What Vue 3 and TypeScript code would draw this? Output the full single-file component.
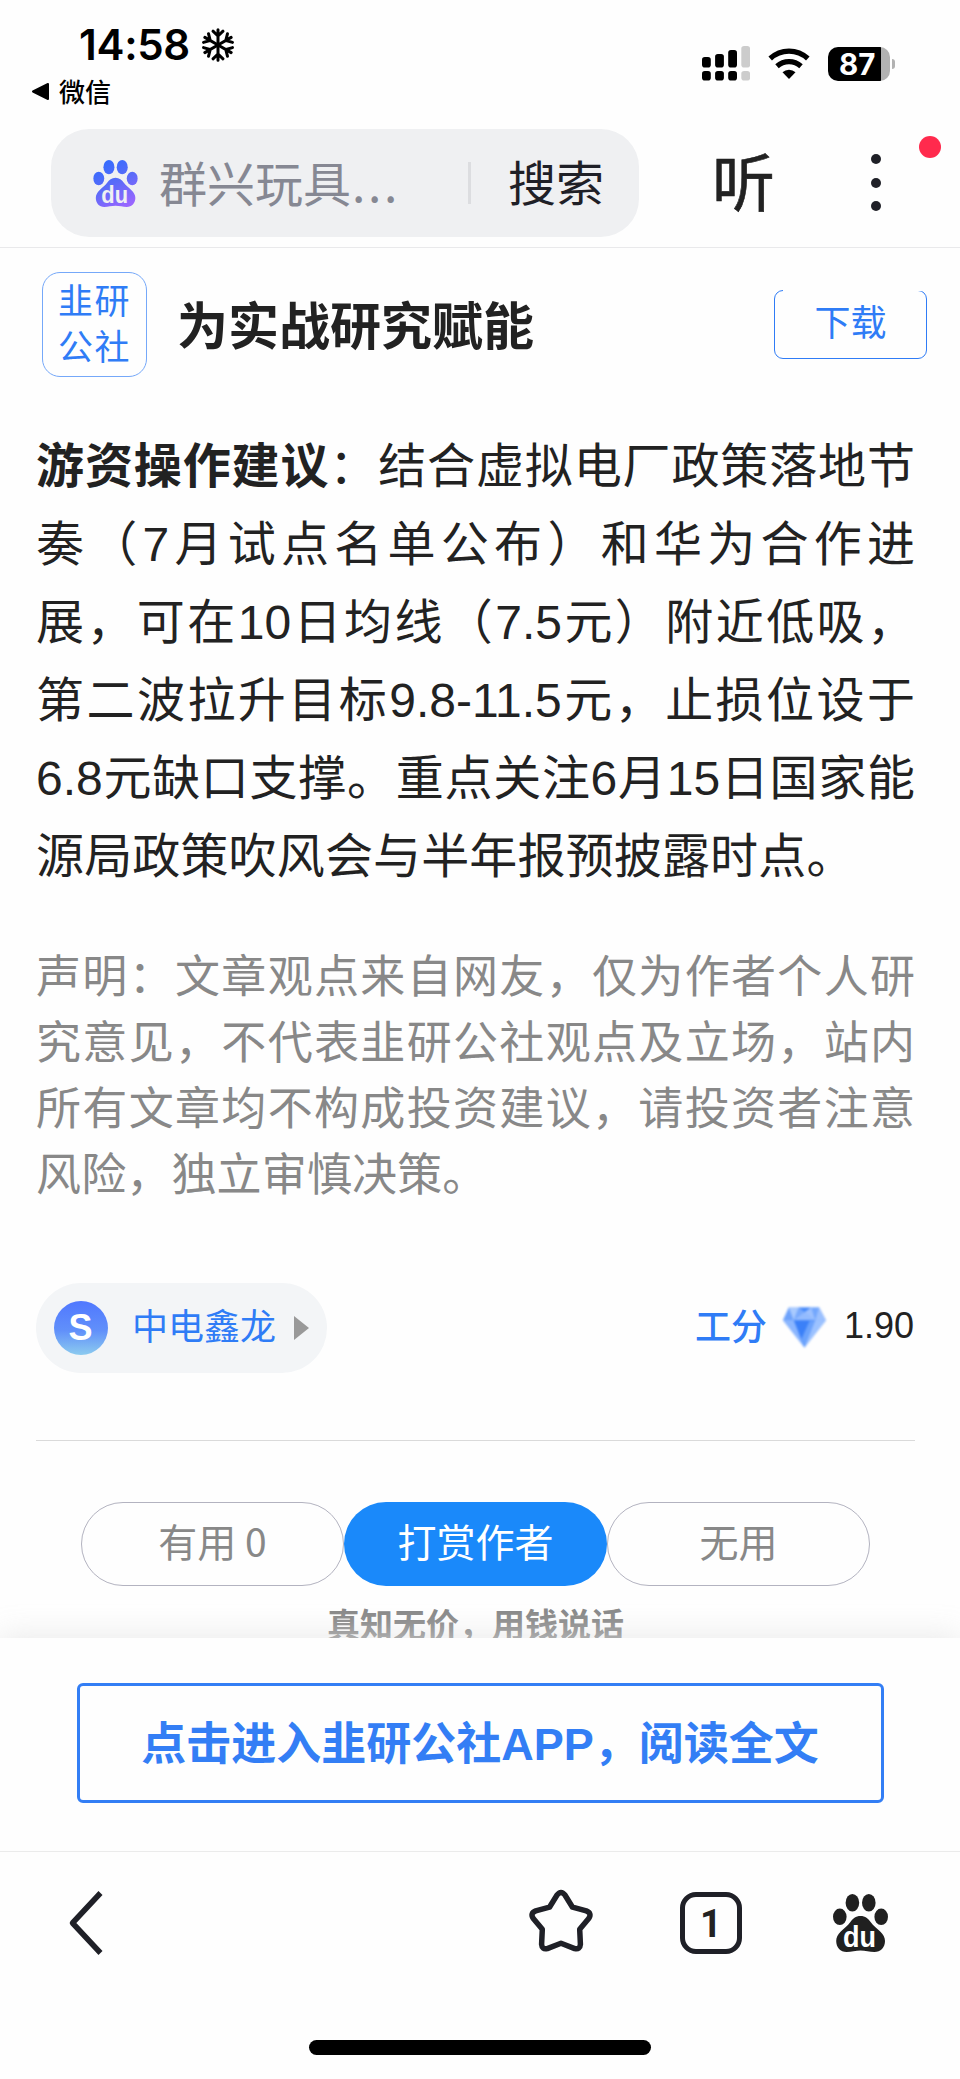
<script setup lang="ts">
const adviceLead = '游资操作建议'
const adviceLines: string[] = [
  '：结合虚拟电厂政策落地节',
  '奏（7月试点名单公布）和华为合作进',
  '展，可在10日均线（7.5元）附近低吸，',
  '第二波拉升目标9.8-11.5元，止损位设于',
  '6.8元缺口支撑。重点关注6月15日国家能',
  '源局政策吹风会与半年报预披露时点。',
]
const noticeLines: string[] = [
  '声明：文章观点来自网友，仅为作者个人研',
  '究意见，不代表韭研公社观点及立场，站内',
  '所有文章均不构成投资建议，请投资者注意',
  '风险，独立审慎决策。',
]
const signalTops: number[] = [11, 8, 4, 0]
const flakeAngles: number[] = [0, 60, 120, 180, 240, 300]
</script>

<template>
  <div class="screen">
    <svg class="defs" width="0" height="0" aria-hidden="true">
      <defs>
        <linearGradient id="pawFill" gradientUnits="userSpaceOnUse" x1="10" y1="0" x2="40" y2="58">
          <stop offset="0" stop-color="#2f6bff" />
          <stop offset="0.5" stop-color="#5a6bf8" />
          <stop offset="1" stop-color="#9a66ff" />
        </linearGradient>
        <symbol id="paw" viewBox="0 0 55 58">
          <ellipse cx="6.8" cy="22.8" rx="6.8" ry="8.3" />
          <ellipse cx="19.4" cy="8.8" rx="6.8" ry="8.8" />
          <ellipse cx="35.8" cy="8.8" rx="6.8" ry="8.8" />
          <ellipse cx="48.2" cy="22.8" rx="6.8" ry="8.3" />
          <path d="M27.5 22c4.800 0 7.800 2.600 10.300 6.200 2.400 3.400 6.200 6 9.400 9.200 3 3 4.800 5.800 4.800 9.600 0 6.400-4.400 11-10.600 11-5 0-9-1.500-13.900-1.500S18.600 58 13.600 58C7.400 58 3.200 53.400 3.200 47c0-3.800 1.600-6.600 4.600-9.600 3.200-3.200 7-5.800 9.400-9.200 2.500-3.600 5.500-6.200 10.300-6.200z" />
        </symbol>
      </defs>
    </svg>

    <header class="status">
      <div class="clock-side">
        <div class="clock">
          <span>14:58</span>
          <svg class="flake" width="32" height="34" viewBox="-16 -17 32 34">
            <g v-for="a in flakeAngles" :key="a" :transform="`rotate(${a})`">
              <path d="M0 0V-15.200M-5 -13.800L0 -9L5 -13.800" />
            </g>
          </svg>
        </div>
        <div class="return">
          <svg width="19" height="19" viewBox="0 0 19 19"><path d="M2 9.500L17 2V17z" stroke="#000" stroke-width="2" stroke-linejoin="round" /></svg>
          <span>微信</span>
        </div>
      </div>
      <div class="indicators">
        <svg width="48" height="35" viewBox="0 0 48 35">
          <g v-for="(t, i) in signalTops" :key="i" :fill="i === 3 ? '#ccc' : '#000'">
            <rect :x="i * 13.1" :y="t" width="8.800" :height="21.500 - t" rx="2.800" />
            <rect :x="i * 13.1" y="25" width="8.800" height="9.500" rx="2.800" />
          </g>
        </svg>
        <svg class="wifi" width="42" height="32" viewBox="0 0 42 32">
          <path d="M2.200 10.500A27.500 27.500 0 0 1 39.800 10.500M9 18.200A18 18 0 0 1 33 18.200" fill="none" stroke="#000" stroke-width="5.200" />
          <path d="M14.500 24.200A9.500 9.500 0 0 1 27.500 24.200L21 31z" />
        </svg>
        <div class="battery"><span>87</span></div>
        <div class="nub"></div>
      </div>
    </header>

    <nav class="topbar">
      <div class="search">
        <svg class="search-paw" width="45" height="47" viewBox="0 0 55 58">
          <use href="#paw" width="55" height="58" fill="url(#pawFill)" />
          <text x="10" y="53" textLength="33" lengthAdjust="spacingAndGlyphs">du</text>
        </svg>
        <span class="query">群兴玩具<span class="dots">...</span></span>
        <i class="bar"></i>
        <span class="go">搜索</span>
      </div>
      <span class="listen">听</span>
      <div class="more"><i></i><i></i><i></i><b></b></div>
    </nav>

    <main>
      <section class="promo">
        <div class="logo"><span>韭研</span><span>公社</span></div>
        <h1>为实战研究赋能</h1>
        <button class="download">下载</button>
      </section>

      <article class="advice">
        <p v-for="(line, i) in adviceLines" :key="i"><strong v-if="i === 0">{{ adviceLead }}</strong>{{ line }}</p>
      </article>
      <article class="notice">
        <p v-for="(line, i) in noticeLines" :key="i">{{ line }}</p>
      </article>

      <section class="meta">
        <div class="stock">
          <span class="badge">S</span>
          <span class="name">中电鑫龙</span>
          <svg width="15" height="24" viewBox="0 0 15 24"><path d="M0 0L15 12L0 24z" fill="#999" /></svg>
        </div>
        <div class="score">
          <span class="label">工分</span>
          <svg class="gem" width="43" height="41" viewBox="0 0 44 41">
            <path d="M6 0H37L44 13L22 41L0 13z" fill="#83b0fc" />
            <path d="M6 0L11 13H0z" fill="#6da2fb" />
            <path d="M6 0H16L11 13z" fill="#a9cafe" />
            <path d="M16 0H29L22 5z" fill="#4488fa" />
            <path d="M16 0L22 5L11 13z" fill="#79aafc" />
            <path d="M29 0L33 13L22 5z" fill="#9dc1fe" />
            <path d="M29 0H37L33 13z" fill="#73a7fd" />
            <path d="M37 0L44 13H33z" fill="#9bc0fe" />
            <path d="M11 13L22 5L33 13H11z" fill="#93bbfe" />
            <path d="M0 13H11L22 41z" fill="#8bb6fe" />
            <path d="M11 13H33L22 41z" fill="#3b80f8" />
            <path d="M27 14L33 13L22 41L19 32z" fill="#6ca3fc" />
            <path d="M33 13H44L22 41z" fill="#9cc2ff" />
          </svg>
          <span class="value">1.90</span>
        </div>
      </section>

      <section class="votes">
        <button>有用 0</button>
        <button class="reward">打赏作者</button>
        <button>无用</button>
      </section>
      <p class="slogan">真知无价，用钱说话</p>
    </main>

    <section class="open-app"><button>点击进入韭研公社APP，阅读全文</button></section>

    <footer class="toolbar">
      <svg class="back" width="40" height="68" viewBox="0 0 40 68"><path d="M33.500 4L5.500 34L33.500 64" /></svg>
      <svg class="star" width="66" height="64" viewBox="0 0 66 64">
        <path d="M28.900 6.200Q33 .8 37.100 6.200L44.500 18.200L58.300 21.900Q64.200 24.200 60.700 29.600L51.700 40.300L52.400 55.200Q52 60.900 46.700 59.600L33 54.200L19.300 59.600Q14 60.900 13.600 55.200L14.300 40.300L5.300 29.600Q1.800 24.200 7.700 21.900L21.500 18.200z" />
      </svg>
      <div class="tabs">1</div>
      <svg class="home" width="55" height="58" viewBox="0 0 55 58">
        <use href="#paw" width="55" height="58" fill="#202020" />
        <text x="10" y="53" textLength="33" lengthAdjust="spacingAndGlyphs">du</text>
      </svg>
    </footer>
    <div class="indicator"></div>
  </div>
</template>

<style>
body { margin: 0; background: #fff; }
</style>

<style scoped>
* { box-sizing: border-box; }
p, h1 { margin: 0; }
button { font: inherit; padding: 0; background: none; }
svg { display: block; flex: none; }
.defs { position: absolute; }
.screen {
  width: 960px; height: 2079px; overflow: hidden; background: #fefefe; color: #222;
  display: flex; flex-direction: column; text-spacing-trim: space-all; white-space: nowrap;
  font-family: "Liberation Sans", "Noto Sans CJK SC", sans-serif;
}
.status { height: 129px; flex: none; display: flex; justify-content: space-between; color: #000; }
.clock { display: flex; align-items: center; height: 50px; margin: 20px 0 0 79px; font: 600 42px/50px Inter, sans-serif; letter-spacing: -.3px; }
.flake { margin: -1px 0 0 12px; fill: none; stroke: #000; stroke-width: 3; stroke-linecap: round; }
.return { display: flex; align-items: center; gap: 9px; margin: 2px 0 0 31px; height: 39px; font: 500 26px/39px "Noto Sans CJK SC", sans-serif; }
.return span { margin-top: -3px; }
.indicators { display: flex; align-items: flex-start; padding: 46px 65px 0 0; }
.wifi { margin: 2px 0 0 18px; }
.battery {
  width: 62px; height: 34px; margin: 1px 0 0 18px; border-radius: 10px;
  background: linear-gradient(90deg, #000 53px, #b2b2b2 53px);
  color: #fff; font: 700 29.500px/34px Inter, sans-serif; padding-left: 11px;
}
.nub { width: 3px; height: 10px; margin: 13px 0 0 2px; background: #b2b2b2; border-radius: 0 5px 5px 0; }

.topbar { height: 119px; flex: none; display: flex; border-bottom: 1px solid #e9e9eb; padding-left: 51px; }
.search { width: 588px; height: 108px; border-radius: 38px; background: #eff0f2; display: flex; align-items: center; padding-left: 42px; font: 400 48px/72px "Noto Sans CJK SC", sans-serif; }
.search-paw text { fill: #eff0f2; }
svg text { font: 700 30px "Liberation Sans", sans-serif; }
.query { width: 309px; margin: -5px 0 0 21px; color: #868893; }
.dots { letter-spacing: 2.700px; margin-left: 1px; }
.bar { width: 3px; height: 42px; background: #dcdde0; }
.go { margin: -6px 0 0 37px; color: #1f2027; }
.listen { margin: -4px 0 0 73px; width: 63px; font: 400 63px/108px "Noto Sans CJK SC", sans-serif; -webkit-text-stroke: .6px #222; }
.more { position: relative; margin: 25px 0 0 96px; width: 10px; height: 57px; display: flex; flex-direction: column; justify-content: space-between; }
.more i { width: 10px; height: 10px; border-radius: 50%; background: #1f2027; }
.more b { position: absolute; left: 48px; top: -18px; width: 22px; height: 22px; border-radius: 50%; background: #ff2a4d; }

main { height: 1390px; flex: none; overflow: hidden; }
.promo { height: 105px; margin: 24px 33px 0 42px; display: flex; align-items: center; }
.logo { width: 105px; height: 105px; border: 1px solid #75a8f9; border-radius: 18px; color: #2f7cf6; font: 400 35px/46px "AR PL UKai CN", KaiTi, "Noto Sans CJK SC", serif; padding: 3px 0 0 15px; display: flex; flex-direction: column; letter-spacing: 1.500px; }
h1 { margin: 6px 0 0 30px; font-size: 51px; line-height: 76px; font-weight: 700; }
.download { position: relative; width: 153px; height: 69px; margin: -1px 0 0 auto; border: 1px solid #2f7cf6; border-radius: 9px; color: #2f7cf6; font-size: 36px; line-height: 64px; }
.download::before { content: ""; position: absolute; left: 8px; right: 4px; top: -1px; height: 1px; background: #fefefe; }
.advice { margin: 51px 45px 0 36px; font-size: 48px; line-height: 78px; }
.advice p, .notice p { text-align: justify; text-align-last: justify; }
.advice p:last-child, .notice p:last-child { text-align-last: left; letter-spacing: .15px; }
.notice { margin: 49px 45px 0 36px; font-size: 45px; line-height: 66px; color: #888; }
.meta { margin: 74px 45px 0 36px; height: 158px; border-bottom: 1px solid #dadada; display: flex; justify-content: space-between; font-size: 36px; }
.stock { width: 291px; height: 90px; border-radius: 45px; background: #f3f5f7; display: flex; align-items: center; padding-left: 18px; color: #2f7cf6; }
.badge { width: 54px; height: 54px; border-radius: 50%; background: linear-gradient(#5078ff, #6190fa 55%, #8ccbef); color: #fff; font: 700 36px/53px "Liberation Sans", sans-serif; text-align: center; text-indent: -1px; }
.name { margin: 0 18px 0 24px; line-height: 54px; }
.score { height: 90px; display: flex; align-items: center; }
.label { margin-top: -8px; color: #2f7cf6; font-weight: 500; font-family: "Noto Sans CJK SC", sans-serif; }
.gem { margin: -2px 18px 0 16px; filter: blur(.8px); }
.value { line-height: 40px; margin: -4px 1px 0 0; }
.votes { margin: 61px 90px 0 81px; display: flex; }
.votes button { width: 263px; flex: none; height: 84px; border: 1px solid #b3b3c0; border-radius: 42px; color: #888; font: 400 39px/72px "Noto Sans CJK SC", sans-serif; padding-bottom: 8px; }
.votes .reward { border: 0; background: #1a89fa; color: #fff; }
.slogan { text-align: center; margin: 13px 9px 0 0; font: 700 33px/49px "Noto Sans CJK SC", sans-serif; color: #888; }

.open-app { position: relative; height: 213px; flex: none; padding: 45px 76px 0 77px; background: #fefefe; box-shadow: 0 0 30px rgba(226, 226, 226, .8); }
.open-app button { display: block; width: 100%; height: 120px; border: 3px solid #337ef5; border-radius: 6px; color: #337ef5; font-size: 45px; line-height: 110px; font-weight: 700; padding: 4px 1px 0 0; }
.toolbar { position: relative; height: 189px; flex: none; border-top: 1px solid #ebebeb; background: #fefefe; display: flex; padding-left: 67px; }
.back, .star { fill: none; stroke: #1f2027; stroke-width: 5.500; stroke-linejoin: round; }
.back { margin-top: 37px; }
.star { margin: 37px 0 0 421px; }
.tabs { width: 62px; height: 62px; margin: 40px 0 0 86px; border: 5.500px solid #1f2027; border-radius: 16px; font: 700 38px/54px Roboto, sans-serif; text-align: center; }
.home { margin: 42px 0 0 91px; }
.home text { fill: #fff; }
.indicator { position: relative; width: 342px; height: 15px; margin-left: 309px; border-radius: 8px; background: #000; flex: none; }
</style>
